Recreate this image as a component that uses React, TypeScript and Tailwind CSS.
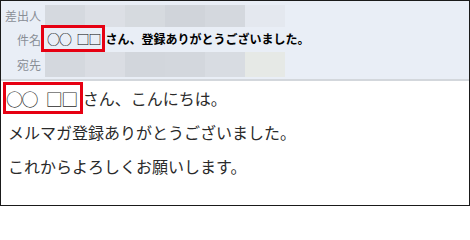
import React from "react";

const row1 = ["#d5d9df", "#dcdfe5", "#d6dadf", "#d0d4da", "#d4d8de", "#e4e8ef"];
const row3 = ["#d4d8de", "#dadde3", "#d2d6dc", "#d3d7dd", "#d8dce2", "#e6e9e6"];

function Blocks({ colors }: { colors: string[] }) {
  return (
    <div className="flex h-full">
      {colors.map((c, i) => (
        <div key={i} className="w-[40px] h-full" style={{ backgroundColor: c }} />
      ))}
    </div>
  );
}

export default function App() {
  const font = { fontFamily: '"Noto Sans CJK JP", "Noto Sans", sans-serif' };
  return (
    <div
      className="w-[470px] h-[206px] border border-[#1a1a1a] bg-white overflow-hidden flex flex-col"
      style={font}
    >
      <div className="bg-[#e9eef6] border-b-2 border-[#d3d7dc] pt-[4px] pb-[2px] flex flex-col">
        <div className="flex h-[22px] items-center">
          <div className="w-[40px] text-right text-[12px] text-[#8a8f96] leading-none">差出人</div>
          <div className="ml-[4px] h-full">
            <Blocks colors={row1} />
          </div>
        </div>
        <div className="flex h-[25px] items-end">
          <div className="w-[40px] self-center text-right text-[12px] text-[#8a8f96] leading-none">件名</div>
          <div className="flex items-center h-[27px]">
            <span className="h-full flex items-center border-[3px] border-[#e60012] pl-[3px] pr-[2px] text-[13px] tracking-[-1px] font-normal text-black leading-none whitespace-pre [word-spacing:3.5px]">
              ○○ □□
            </span>
            <span className="text-[12px] font-bold text-black leading-none">さん、登録ありがとうございました。</span>
          </div>
        </div>
        <div className="flex h-[25px] items-center">
          <div className="w-[40px] text-right text-[12px] text-[#8a8f96] leading-none">宛先</div>
          <div className="ml-[4px] h-full">
            <Blocks colors={row3} />
          </div>
        </div>
      </div>
      <div className="flex flex-col text-[16px] text-[#2a2a2a] leading-none">
        <div className="h-[34px] flex items-center pl-[2px]">
          <span className="h-[32px] flex items-center border-[3px] border-[#e60012] pl-0 pr-[3px] text-[17px] tracking-[-1.5px] whitespace-pre [word-spacing:6.5px]">
            ○○ □□
          </span>
          <span>さん、こんにちは。</span>
        </div>
        <div className="h-[34px] flex items-center pl-[7px]">メルマガ登録ありがとうございました。</div>
        <div className="h-[34px] flex items-center pl-[7px]">これからよろしくお願いします。</div>
      </div>
    </div>
  );
}
